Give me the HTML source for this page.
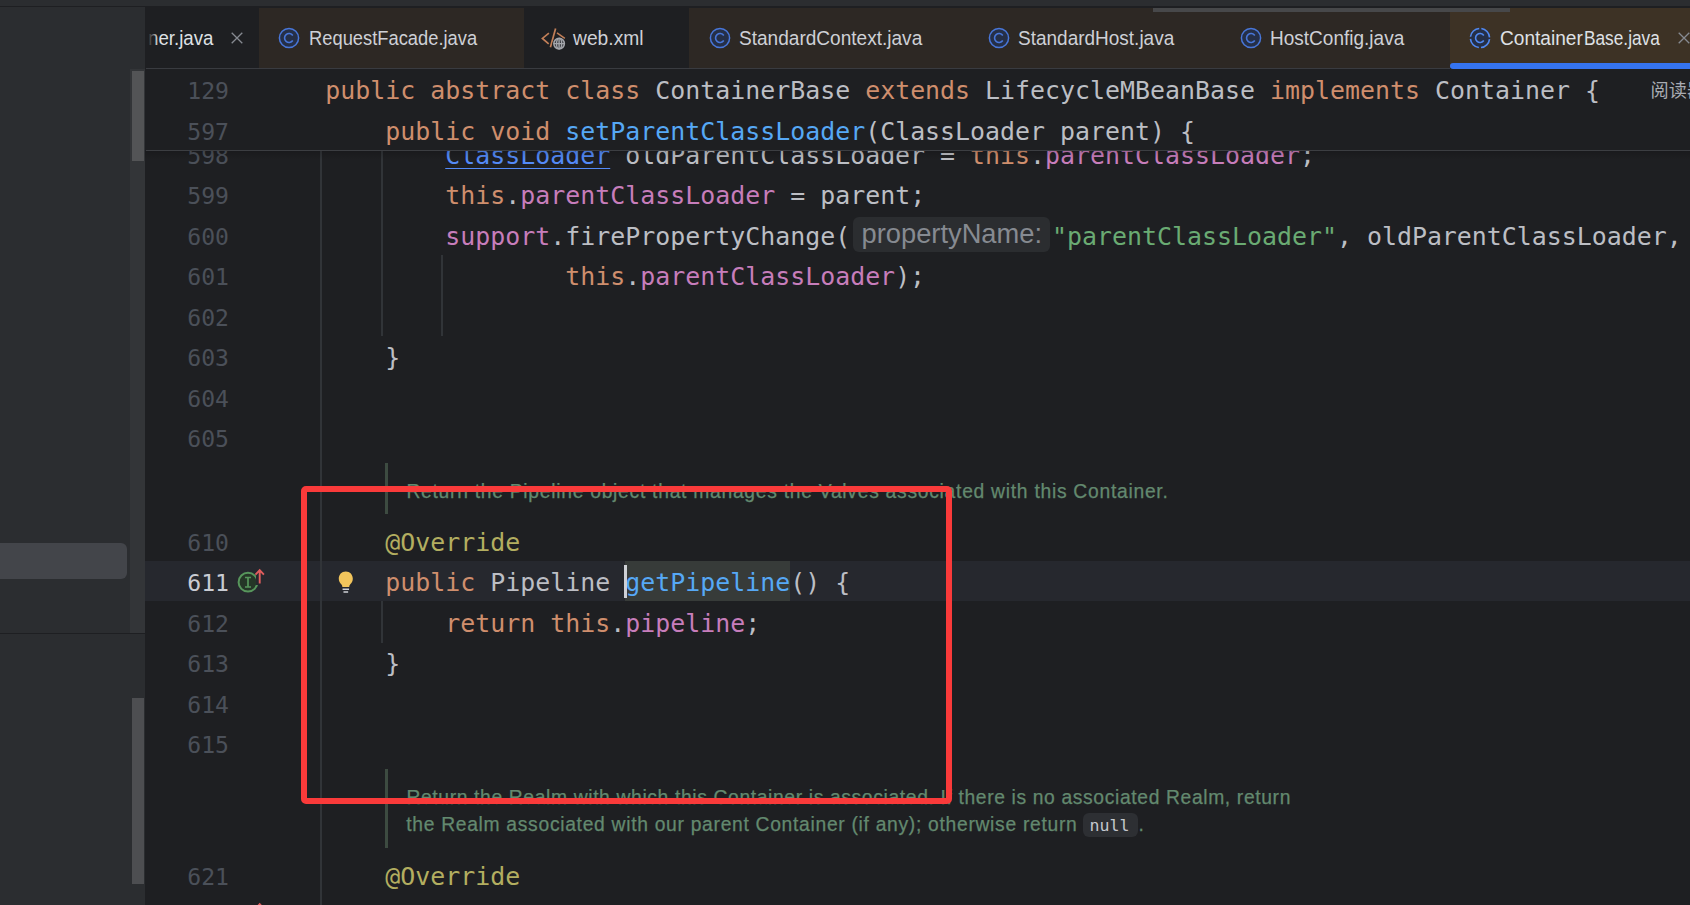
<!DOCTYPE html>
<html lang="en">
<head>
<meta charset="utf-8">
<title>ContainerBase.java</title>
<style>
*{box-sizing:border-box;margin:0;padding:0}
html,body{width:1690px;height:905px;overflow:hidden;background:#1e1f22}
body{position:relative;font-family:"Liberation Sans","Noto Sans CJK SC",sans-serif;color:#bcbec4}
div,span,svg{position:absolute}
.code span,.doc span,.hint span{position:static}
.tl span{position:static;display:inline-block;transform-origin:0 0}
#topbar{left:0;top:0;width:1690px;height:6px;background:#2b2d30}
#topline{left:0;top:6px;width:1690px;height:1px;background:#1e1f22}
#left{left:0;top:7px;width:145px;height:898px;background:#2b2d30}
#tabs{left:145px;top:7px;width:1545px;height:61px;background:#1e1f22}
#tabline{left:146px;top:68px;width:1544px;height:1px;background:#393b40}
.tabbg{top:8px;height:60px}
.tl{top:9px;height:60px;font-size:19.3px;line-height:60px;color:#ced0d6;white-space:nowrap;transform-origin:0 0}
.code{font-family:"DejaVu Sans Mono","Liberation Mono",monospace;font-size:24.92px;white-space:pre;line-height:40px;height:40px;left:325.3px;color:#bcbec4}
.ln{left:146px;width:83px;text-align:right;font-family:"DejaVu Sans Mono","Liberation Mono",monospace;font-size:23.1px;line-height:40px;height:40px;color:#4b5059;transform:scaleY(0.96);transform-origin:0 28px;white-space:pre}
.ln.cur{color:#c9ccd3}
.k{color:#cf8e6d}.m{color:#56a8f5}.f{color:#c77dbb}.s{color:#6aab73}.a{color:#b3ae60}
.lk{color:#548af7;text-decoration:underline;text-decoration-thickness:1px;text-underline-offset:3.5px}
.doc{font-size:19.3px;color:#63896f;-webkit-text-stroke:0.25px #63896f;white-space:nowrap;line-height:27px;height:27px}
.g{width:2px;background:#313438}
</style>
</head>
<body>

<div id="topbar"></div><div id="topline"></div>
<div id="left"></div>
<div style="left:130px;top:69px;width:15px;height:564px;background:#333538"></div>
<div style="left:132px;top:71px;width:12px;height:90px;background:#535456"></div>
<div style="left:0;top:543px;width:127px;height:36px;background:#43454a;border-radius:0 6px 6px 0"></div>
<div style="left:0;top:633px;width:145px;height:1px;background:#1e1f22"></div>
<div style="left:132px;top:698px;width:12px;height:186px;background:#4d4e51"></div>
<div id="tabs"></div>
<div class="tabbg" style="left:259px;width:265px;background:#2d2824"></div>
<div class="tabbg" style="left:689px;width:761px;background:#2d2824"></div>
<div class="tabbg" style="left:1450px;width:240px;background:#3d3225"></div>
<div style="left:1153px;top:8px;width:357px;height:4px;background:#47484a"></div>
<div style="left:1450px;top:63px;width:244px;height:6px;background:#3574f0;border-radius:3px"></div>
<div id="tabline" style="width:1304px"></div>
<div class="tl" style="left:147.63px;color:#dfe1e5"><span style="transform:scaleX(0.9685)">ner.java</span></div>
<div style="left:145px;top:8px;width:13px;height:60px;background:linear-gradient(90deg,#1e1f22 25%,rgba(30,31,34,0))"></div>
<svg style="left:229px;top:30px" width="16" height="16" viewBox="0 0 16 16"><path d="M2.7 2.7 L13.3 13.3 M13.3 2.7 L2.7 13.3" stroke="#868a91" stroke-width="1.3" fill="none"/></svg>
<svg style="left:277px;top:26px" width="24" height="24" viewBox="0 0 24 24"><circle cx="12" cy="12" r="9.6" fill="#252f47" stroke="#4876d8" stroke-width="1.5"/><path d="M15.8 9.5 A4.5 4.5 0 1 0 15.8 14.5" fill="none" stroke="#4876d8" stroke-width="1.6"/></svg>
<div class="tl" style="left:309.35px;color:#ced0d6"><span style="transform:scaleX(0.9510)">RequestFacade.java</span></div>
<svg style="left:538px;top:26px" width="30" height="26" viewBox="0 0 30 26"><path d="M10.9 7.1 L4.4 12.4 L10.7 17.8" fill="none" stroke="#c27f58" stroke-width="1.7"/><path d="M17.6 2.4 L12.4 21.3" fill="none" stroke="#c27f58" stroke-width="1.7"/><path d="M19 6.9 L26.8 12.4" fill="none" stroke="#c27f58" stroke-width="1.5"/><circle cx="21.1" cy="17.6" r="6.6" fill="#1e1f22"/><circle cx="21.1" cy="17.6" r="5.3" fill="#3a3c41" stroke="#a3a5ab" stroke-width="1.5"/><path d="M15.8 17.6 H26.4 M21.1 12.3 V22.9" fill="none" stroke="#a3a5ab" stroke-width="1.4"/><ellipse cx="21.1" cy="17.6" rx="2.6" ry="5.3" fill="none" stroke="#a3a5ab" stroke-width="1.3"/></svg>
<div class="tl" style="left:573.30px;color:#ced0d6"><span style="transform:scaleX(0.9982)">web.xml</span></div>
<svg style="left:708px;top:26px" width="24" height="24" viewBox="0 0 24 24"><circle cx="12" cy="12" r="9.6" fill="#252f47" stroke="#4876d8" stroke-width="1.5"/><path d="M15.8 9.5 A4.5 4.5 0 1 0 15.8 14.5" fill="none" stroke="#4876d8" stroke-width="1.6"/></svg>
<div class="tl" style="left:739.00px;color:#ced0d6"><span style="transform:scaleX(0.9881)">StandardContext.java</span></div>
<svg style="left:987px;top:26px" width="24" height="24" viewBox="0 0 24 24"><circle cx="12" cy="12" r="9.6" fill="#252f47" stroke="#4876d8" stroke-width="1.5"/><path d="M15.8 9.5 A4.5 4.5 0 1 0 15.8 14.5" fill="none" stroke="#4876d8" stroke-width="1.6"/></svg>
<div class="tl" style="left:1018.10px;color:#ced0d6"><span style="transform:scaleX(0.9849)">StandardHost.java</span></div>
<svg style="left:1239px;top:26px" width="24" height="24" viewBox="0 0 24 24"><circle cx="12" cy="12" r="9.6" fill="#252f47" stroke="#4876d8" stroke-width="1.5"/><path d="M15.8 9.5 A4.5 4.5 0 1 0 15.8 14.5" fill="none" stroke="#4876d8" stroke-width="1.6"/></svg>
<div class="tl" style="left:1270.01px;color:#ced0d6"><span style="transform:scaleX(0.9861)">HostConfig.java</span></div>
<svg style="left:1468px;top:26px" width="24" height="24" viewBox="0 0 24 24"><circle cx="12" cy="12" r="9.6" fill="#252f47" stroke="#5088f0" stroke-width="1.6" stroke-dasharray="12.88 2.2" stroke-dashoffset="-1.1"/><path d="M15.8 9.5 A4.5 4.5 0 1 0 15.8 14.5" fill="none" stroke="#5088f0" stroke-width="1.6"/></svg>
<div class="tl" style="left:1500.00px;color:#dfe1e5"><span style="transform:scaleX(0.9907)">Container</span><span style="margin-left:0.50px;transform:scaleX(0.8957)">Base.java</span></div>
<svg style="left:1676.4px;top:30px" width="16" height="16" viewBox="0 0 16 16"><path d="M2.7 2.7 L13.3 13.3 M13.3 2.7 L2.7 13.3" stroke="#868a91" stroke-width="1.3" fill="none"/></svg>
<div style="left:145px;top:561px;width:1545px;height:40px;background:#26282e"></div>
<div class="g" style="left:320px;top:151px;height:754px"></div>
<div class="g" style="left:381px;top:151px;height:185px"></div>
<div class="g" style="left:441px;top:255px;height:81px"></div>
<div class="g" style="left:381px;top:601px;height:42px"></div>
<div class="ln" style="top:136px">598</div>
<div class="code" style="top:136px;">        <span class="lk">ClassLoader</span> oldParentClassLoader = <span class="k">this</span>.<span class="f">parentClassLoader</span>;</div>
<div class="ln" style="top:176px">599</div>
<div class="code" style="top:176px;">        <span class="k">this</span>.<span class="f">parentClassLoader</span> = parent;</div>
<div class="ln" style="top:217px">600</div>
<div class="code" style="top:217px;">        <span class="f">support</span>.firePropertyChange(</div>
<div style="left:853px;top:217px;width:196.5px;height:35px;background:#2b2d30;border-radius:6px"></div>
<div class="hint" style="left:861.5px;top:214.20px;font-size:27.3px;line-height:40px;height:40px;color:#868a91;white-space:nowrap">propertyName:</div>
<div class="code" style="top:217px;left:1052px"><span class="s">"parentClassLoader"</span>, oldParentClassLoader,</div>
<div class="ln" style="top:257px">601</div>
<div class="code" style="top:257px;">                <span class="k">this</span>.<span class="f">parentClassLoader</span>);</div>
<div class="ln" style="top:298px">602</div>
<div class="ln" style="top:338px">603</div>
<div class="code" style="top:338px;">    }</div>
<div class="ln" style="top:379px">604</div>
<div class="ln" style="top:419px">605</div>
<div style="left:385px;top:463px;width:3px;height:51px;background:#3d4b41"></div>
<div class="doc" style="left:406.40px;top:478px;letter-spacing:0.724px">Return the Pipeline object that manages the Valves associated with this Container.</div>
<div class="ln" style="top:523px">610</div>
<div class="code" style="top:523px;">    <span class="a">@Override</span></div>
<div class="ln cur" style="top:563px">611</div>
<div style="left:625px;top:561px;width:165px;height:40px;background:#373b39"></div>
<div class="code" style="top:563px;">    <span class="k">public</span> Pipeline <span class="m">getPipeline</span>() {</div>
<div style="left:624px;top:565px;width:3px;height:33px;background:#ced0d6"></div>
<div class="ln" style="top:604px">612</div>
<div class="code" style="top:604px;">        <span class="k">return this</span>.<span class="f">pipeline</span>;</div>
<div class="ln" style="top:644px">613</div>
<div class="code" style="top:644px;">    }</div>
<div class="ln" style="top:685px">614</div>
<div class="ln" style="top:725px">615</div>
<svg style="left:236px;top:566px" width="32" height="32" viewBox="0 0 32 32"><circle cx="12" cy="16.2" r="9.4" fill="#253627" stroke="#57965c" stroke-width="2"/><path d="M9 11.5 H15 M12 11.5 V21 M9 21 H15" fill="none" stroke="#57965c" stroke-width="1.7"/><path d="M20 6 H28 V19 H20 Z" fill="#26282e"/><path d="M23.7 17.6 V4.6 M19.5 8.6 L23.7 4.2 L27.9 8.6" fill="none" stroke="#e05d5d" stroke-width="1.9"/></svg>
<svg style="left:335.2px;top:568.5px" width="21.6" height="27" viewBox="0 0 24 28" preserveAspectRatio="none"><path d="M12 2.6 C7.3 2.6 4.2 6 4.2 10 C4.2 12.8 5.6 14.4 7 15.8 C7.8 16.6 8.2 17.4 8.2 18.6 H15.8 C15.8 17.4 16.2 16.6 17 15.8 C18.4 14.4 19.8 12.8 19.8 10 C19.8 6 16.7 2.6 12 2.6 Z" fill="#f2c55c"/><path d="M8.4 21 H15.6 M9.4 23.8 H14.6" stroke="#ced0d6" stroke-width="1.7" fill="none"/></svg>
<div style="left:385px;top:769px;width:3px;height:79px;background:#3d4b41"></div>
<div class="doc" style="left:406.40px;top:784px;letter-spacing:0.635px">Return the Realm with which this Container is associated. If there is no associated Realm, return</div>
<div style="left:1082.5px;top:813px;width:55.5px;height:24px;background:#2d2f33;border-radius:6px"></div>
<div class="doc" style="left:406.20px;top:811px;letter-spacing:0.695px">the Realm associated with our parent Container (if any); otherwise return</div>
<div style="left:1089.5px;top:806px;height:40px;line-height:40px;font-family:'DejaVu Sans Mono','Liberation Mono',monospace;font-size:16.6px;color:#c4c7cd;white-space:pre">null</div>
<div class="doc" style="left:1138.5px;top:811px">.</div>
<div class="ln" style="top:857px">621</div>
<div class="code" style="top:857px;">    <span class="a">@Override</span></div>
<svg style="left:236px;top:900.0px" width="32" height="32" viewBox="0 0 32 32"><path d="M23.7 17.6 V4.6 M19.5 8.6 L23.7 4.2 L27.9 8.6" fill="none" stroke="#e05d5d" stroke-width="1.9"/></svg>
<div style="left:145px;top:69px;width:1545px;height:81px;background:#1e1f22"></div>
<div style="left:146px;top:150px;width:1544px;height:1px;background:#3c3e42"></div>
<div style="left:145px;top:151px;width:1545px;height:9px;background:linear-gradient(180deg,rgba(0,0,0,0.16),rgba(0,0,0,0))"></div>
<div class="ln" style="top:71px">129</div>
<div class="code" style="top:71px;"><span class="k">public abstract class</span> ContainerBase <span class="k">extends</span> LifecycleMBeanBase <span class="k">implements</span> Container {</div>
<div class="ln" style="top:112px">597</div>
<div class="code" style="top:112px;">    <span class="k">public void</span> <span class="m">setParentClassLoader</span>(ClassLoader parent) {</div>
<div style="left:1650.6px;top:76px;font-size:18.2px;line-height:30px;color:#a8abb2;white-space:nowrap">阅读器</div>
<div style="left:301px;top:486px;width:651px;height:318px;border:6px solid #fa3a3a;border-radius:5px"></div>
</body>
</html>
